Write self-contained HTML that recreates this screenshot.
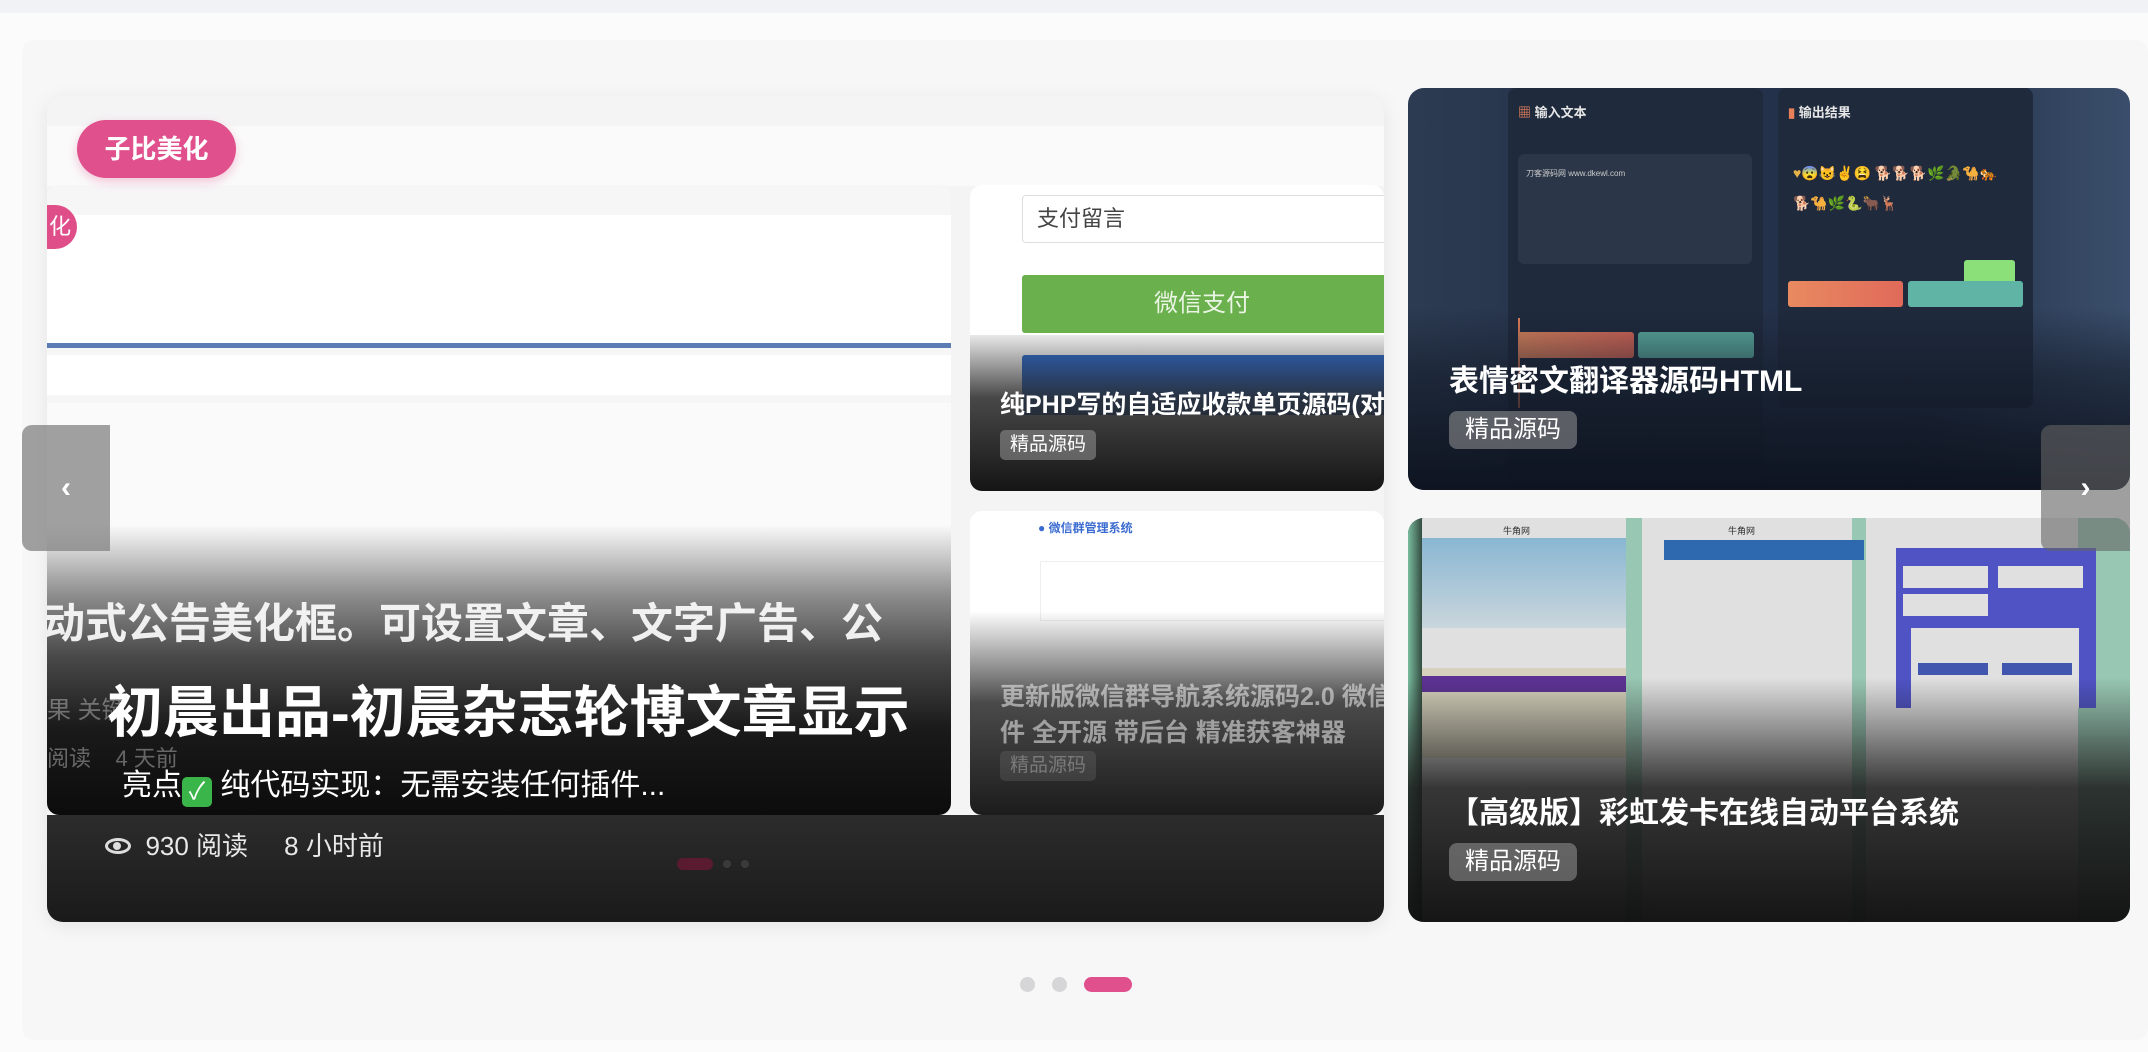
<!DOCTYPE html>
<html><head><meta charset="utf-8"><style>
*{margin:0;padding:0;box-sizing:border-box}
body{width:2148px;height:1052px;overflow:hidden;background:#fbfbfc;font-family:"Liberation Sans","Noto Sans CJK SC",sans-serif;position:relative}
.abs{position:absolute}
.topbar{left:0;top:0;width:2148px;height:13px;background:#f1f2f5}
.panel{left:22px;top:40px;width:2126px;height:1000px;background:#f7f7f8;border-radius:12px}
.card{overflow:hidden;border-radius:16px}
.tag{background:rgba(150,150,150,.55);color:#fff;border-radius:8px;font-size:24px;line-height:38px;padding:0 16px}
</style></head><body>
<div class="abs topbar"></div>
<div class="abs panel"></div>

<!-- LEFT BIG CARD -->
<div class="abs card" style="left:47px;top:96px;width:1337px;height:826px;background:#f4f4f5;box-shadow:0 4px 20px rgba(0,0,0,.08)">
  <div class="abs" style="left:0;top:30px;width:1337px;height:60px;background:#fafafa"></div>
  <div class="abs" style="left:0;top:89px;width:904px;height:630px;background:#f6f6f7;border-radius:12px;overflow:hidden">
    <div class="abs" style="left:0;top:30px;width:904px;height:130px;background:#fff"></div>
    <div class="abs" style="left:-20px;top:20px;width:50px;height:44px;background:#e04e8a;border-radius:22px;color:#fff;font-size:22px;line-height:44px;text-align:right;padding-right:6px">化</div>
    <div class="abs" style="left:0;top:158px;width:904px;height:5px;background:#5b7bb4"></div>
    <div class="abs" style="left:0;top:170px;width:904px;height:40px;background:#fff"></div>
    <div class="abs" style="left:0;top:218px;width:904px;height:170px;background:#fafafb"></div>
    <div class="abs" style="left:0;top:340px;width:904px;height:290px;background:linear-gradient(rgba(200,200,200,0),#8a8a8a 25%,#4a4a4a 45%,#1a1a1a 70%,#0c0c0c)"></div>
    <div class="abs" style="left:-4px;top:405px;color:#fff;font-size:42px;font-weight:bold;white-space:nowrap;opacity:.9">动式公告美化框。可设置文章、文字广告、公</div>
    <div class="abs" style="left:0;top:505px;color:rgba(255,255,255,.35);font-size:24px;white-space:nowrap">果 关键</div>
    <div class="abs" style="left:0;top:556px;color:rgba(255,255,255,.35);font-size:22px;white-space:nowrap">阅读 &nbsp;&nbsp; 4 天前</div>
  </div>
  <div class="abs" style="left:923px;top:89px;width:414px;height:306px;background:#fff;border-radius:12px;overflow:hidden">
    <div class="abs" style="left:52px;top:10px;width:400px;height:48px;border:1px solid #ddd;border-radius:4px;font-size:22px;color:#444;line-height:46px;padding-left:14px">支付留言</div>
    <div class="abs" style="left:52px;top:90px;width:400px;height:58px;background:#6ab04c;border-radius:3px;color:#eaf5e4;font-size:24px;line-height:58px;text-align:center;padding-right:40px">微信支付</div>
    <div class="abs" style="left:52px;top:170px;width:400px;height:60px;background:#2f6fd6;border-radius:3px"></div>
    <div class="abs" style="left:0;top:150px;width:414px;height:156px;background:linear-gradient(rgba(30,30,30,.1),rgba(40,40,40,.85) 40%,#151515)"></div>
    <div class="abs" style="left:30px;top:200px;color:#fff;font-size:25px;font-weight:bold;white-space:nowrap">纯PHP写的自适应收款单页源码(对接易</div>
    <div class="abs tag" style="left:30px;top:245px;font-size:19px;line-height:30px;padding:0 10px;border-radius:5px">精品源码</div>
  </div>
  <div class="abs" style="left:923px;top:415px;width:414px;height:304px;background:#fff;border-radius:12px;overflow:hidden">
    <div class="abs" style="left:68px;top:8px;color:#3a6bd0;font-size:12px;font-weight:bold">● 微信群管理系统</div>
    <div class="abs" style="left:70px;top:50px;width:350px;height:60px;border:1px solid #eee"></div>
    <div class="abs" style="left:0;top:100px;width:414px;height:204px;background:linear-gradient(rgba(255,255,255,0),#4a4a4a 45%,#1c1c1c)"></div>
    <div class="abs" style="left:30px;top:168px;color:rgba(255,255,255,.5);font-size:25px;font-weight:bold;line-height:36px;white-space:nowrap">更新版微信群导航系统源码2.0 微信自<br>件 全开源 带后台 精准获客神器</div>
    <div class="abs tag" style="left:30px;top:240px;font-size:19px;line-height:30px;padding:0 10px;border-radius:5px;opacity:.35">精品源码</div>
  </div>
  <div class="abs" style="left:0;top:719px;width:1337px;height:107px;background:linear-gradient(#2c2c2c,#1a1a1a)"></div>
  <div class="abs" style="left:630px;top:762px;width:36px;height:12px;background:#5a1a2f;border-radius:6px"></div>
  <div class="abs" style="left:676px;top:764px;width:8px;height:8px;background:#3a3a3a;border-radius:4px"></div>
  <div class="abs" style="left:694px;top:764px;width:8px;height:8px;background:#3a3a3a;border-radius:4px"></div>
  <div class="abs" style="left:30px;top:24px;width:159px;height:58px;background:#e0508c;border-radius:29px;color:#fff;font-size:26px;font-weight:bold;line-height:58px;text-align:center;box-shadow:0 4px 10px rgba(224,80,140,.3)">子比美化</div>
  <div class="abs" style="left:60px;top:572px;color:#fff;font-size:56px;font-weight:bold;white-space:nowrap">初晨出品-初晨杂志轮博文章显示</div>
  <div class="abs" style="left:75px;top:664px;color:#fff;font-size:30px;white-space:nowrap">亮点<span style="display:inline-block;width:30px;height:30px;background:#3ab54a;border-radius:5px;color:#fff;font-size:24px;line-height:30px;text-align:center;vertical-align:-4px">✓</span> 纯代码实现：无需安装任何插件...</div>
  <div class="abs" style="left:58px;top:730px;color:#e8e8e8;font-size:26px;white-space:nowrap"><span style="display:inline-block;width:26px;height:16px;border:3px solid #ddd;border-radius:50%;vertical-align:1px;position:relative"><span style="position:absolute;left:5px;top:1px;width:8px;height:8px;background:#ddd;border-radius:50%"></span></span>&nbsp; 930 阅读 &nbsp;&nbsp;&nbsp; 8 小时前</div>
</div>

<!-- RIGHT TOP CARD -->
<div class="abs card" style="left:1408px;top:88px;width:722px;height:402px;background:linear-gradient(90deg,#2c3b52,#24314a 30%,#24314a 70%,#3a4e6b)">
  <div class="abs" style="left:100px;top:0;width:255px;height:402px;background:#1f2a3d;border-radius:8px"></div>
  <div class="abs" style="left:370px;top:0;width:255px;height:320px;background:#1f2a3d;border-radius:8px"></div>
  <div class="abs" style="left:110px;top:14px;color:#e6e6e6;font-size:13px;font-weight:bold"><span style="color:#e8815a">▦</span> 输入文本</div>
  <div class="abs" style="left:380px;top:14px;color:#e6e6e6;font-size:13px;font-weight:bold"><span style="color:#e8815a">▮</span> 输出结果</div>
  <div class="abs" style="left:110px;top:66px;width:234px;height:110px;background:#2b3648;border-radius:6px;color:#ccc;font-size:8px;padding:14px 8px">刀客源码网 www.dkewl.com</div>
  <div class="abs" style="left:385px;top:70px;font-size:14px;line-height:30px;width:220px;color:#e8b24a">♥😨😺✌😫 🐕🐕🐕🌿🐊🐪🐅<br>🐕🐪🌿🐍🐂🦌</div>
  <div class="abs" style="left:556px;top:172px;width:51px;height:24px;background:#8be07a;border-radius:3px"></div>
  <div class="abs" style="left:110px;top:230px;width:100px;height:90px;border-left:2px solid #e8815a"></div>
  <div class="abs" style="left:110px;top:244px;width:116px;height:26px;background:linear-gradient(90deg,#e88a60,#e06a5a);border-radius:3px"></div>
  <div class="abs" style="left:230px;top:244px;width:116px;height:26px;background:#5fb4a6;border-radius:3px"></div>
  <div class="abs" style="left:380px;top:193px;width:115px;height:26px;background:linear-gradient(90deg,#e88a60,#e06a5a);border-radius:3px"></div>
  <div class="abs" style="left:500px;top:193px;width:115px;height:26px;background:#5fb4a6;border-radius:3px"></div>
  <div class="abs" style="left:0;top:220px;width:722px;height:182px;background:linear-gradient(rgba(20,28,42,0),rgba(20,28,42,.6) 35%,#0e1420)"></div>
  <div class="abs" style="left:41px;top:268px;color:#fff;font-size:30px;font-weight:bold;white-space:nowrap">表情密文翻译器源码HTML</div>
  <div class="abs tag" style="left:41px;top:323px">精品源码</div>
</div>

<!-- RIGHT BOTTOM CARD -->
<div class="abs card" style="left:1408px;top:518px;width:722px;height:404px;background:#1a1a1a">
  <div class="abs" style="left:0;top:0;width:722px;height:404px;background:linear-gradient(90deg,#8ad6b4,#111 3%,#111 7%,#aee3cc 9%)"></div>
  <div class="abs" style="left:14px;top:0;width:204px;height:404px;background:#fff"></div>
  <div class="abs" style="left:14px;top:20px;width:204px;height:90px;background:linear-gradient(#9cd0f0,#e6f4fb)"></div>
  <div class="abs" style="left:14px;top:150px;width:204px;height:90px;background:#f5f0d8"></div>
  <div class="abs" style="left:14px;top:158px;width:204px;height:16px;background:#6a3aa8"></div>
  <div class="abs" style="left:95px;top:6px;font-size:9px;color:#333">牛角网</div>
  <div class="abs" style="left:234px;top:0;width:210px;height:404px;background:#fff"></div>
  <div class="abs" style="left:256px;top:22px;width:200px;height:20px;background:#3578c8"></div>
  <div class="abs" style="left:320px;top:6px;font-size:9px;color:#333">牛角网</div>
  <div class="abs" style="left:458px;top:0;width:212px;height:404px;background:#fff"></div>
  <div class="abs" style="left:488px;top:30px;width:200px;height:160px;background:#5a5fe0"></div>
  <div class="abs" style="left:495px;top:48px;width:85px;height:22px;background:#fff"></div>
  <div class="abs" style="left:590px;top:48px;width:85px;height:22px;background:#fff"></div>
  <div class="abs" style="left:495px;top:76px;width:85px;height:22px;background:#fff"></div>
  <div class="abs" style="left:503px;top:110px;width:168px;height:80px;background:#fff"></div>
  <div class="abs" style="left:510px;top:145px;width:70px;height:12px;background:#4a62c8"></div>
  <div class="abs" style="left:594px;top:145px;width:70px;height:12px;background:#4a62c8"></div>
  <div class="abs" style="left:0;top:0;width:722px;height:404px;background:rgba(0,0,0,.12)"></div>
  <div class="abs" style="left:0;top:160px;width:722px;height:244px;background:linear-gradient(rgba(20,20,20,0),rgba(25,25,25,.85) 45%,rgba(15,15,15,.97))"></div>
  <div class="abs" style="left:41px;top:270px;color:#fff;font-size:30px;font-weight:bold;white-space:nowrap">【高级版】彩虹发卡在线自动平台系统</div>
  <div class="abs tag" style="left:41px;top:325px">精品源码</div>
</div>

<div class="abs" style="left:22px;top:425px;width:88px;height:126px;background:rgba(130,130,130,.75);border-radius:10px 0 0 10px;color:#fff;font-size:30px;font-weight:bold;line-height:126px;text-align:center">‹</div>
<div class="abs" style="left:2041px;top:425px;width:89px;height:126px;background:rgba(100,100,100,.6);border-radius:10px 0 0 10px;color:#fff;font-size:30px;font-weight:bold;line-height:126px;text-align:center">›</div>

<div class="abs" style="left:1020px;top:977px;width:15px;height:15px;background:#d6d6d8;border-radius:50%"></div>
<div class="abs" style="left:1052px;top:977px;width:15px;height:15px;background:#d6d6d8;border-radius:50%"></div>
<div class="abs" style="left:1084px;top:977px;width:48px;height:15px;background:#e0508c;border-radius:8px"></div>
</body></html>
